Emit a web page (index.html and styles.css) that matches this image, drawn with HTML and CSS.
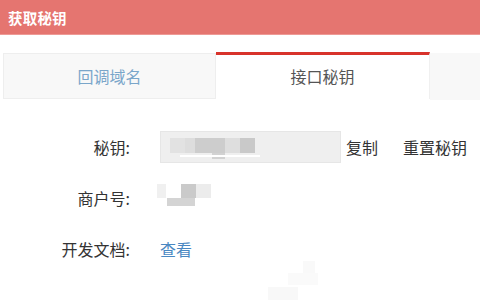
FILE: index.html
```html
<!DOCTYPE html>
<html lang="zh">
<head>
<meta charset="utf-8">
<link rel="stylesheet" href="styles.css">
</head>
<body>
<div class="header"><span class="title">获取秘钥</span></div>
<div class="tabs">
  <div class="tab tab-inactive">回调域名</div>
  <div class="tab tab-active">接口秘钥</div>
  <div class="tab-rest"></div>
</div>
<div class="content">
  <div class="row">
    <div class="label">秘钥:</div>
    <div class="keybox"><div class="blur-key"></div></div>
    <span class="action copy">复制</span>
    <span class="action reset">重置秘钥</span>
  </div>
  <div class="row">
    <div class="label">商户号:</div>
    <div class="blur-mch"></div>
  </div>
  <div class="row">
    <div class="label">开发文档:</div>
    <a class="link">查看</a>
  </div>
  <div class="faint"></div>
</div>
</body>
</html>
```

FILE: styles.css
```css
html, body {
  margin: 0;
  padding: 0;
  background: #ffffff;
  width: 480px;
  height: 300px;
  overflow: hidden;
  font-family: "Noto Sans CJK SC", "Noto Sans", sans-serif;
}
.header {
  height: 34px;
  background: #e57570;
  border-bottom: 1px solid #ee9a96;
  display: flex;
  align-items: center;
  padding-left: 8px;
}
.title {
  color: #ffffff;
  font-weight: bold;
  font-size: 14.5px;
  letter-spacing: 0.2px;
}
.tabs {
  margin-top: 17px;
  display: flex;
  padding-left: 3px;
  height: 47px;
}
.tab {
  display: flex;
  align-items: center;
  justify-content: center;
  font-size: 16px;
  box-sizing: border-box;
}
.tab-inactive {
  width: 213px;
  margin-top: 1px;
  height: 46px;
  background: #f8f8f8;
  border: 1px solid #eeeeee;
  color: #7aa6ca;
}
.tab-active {
  width: 214px;
  height: 47px;
  background: #ffffff;
  border-top: 3px solid #d8332b;
  border-right: 1px solid #f0f0f0;
  color: #555555;
  padding-bottom: 3px;
}
.tab-rest {
  flex: 1;
  margin-top: 1px;
  height: 47px;
  background: #f8f8f8;
}
.content {
  padding-top: 22px;
  position: relative;
  height: 180px;
}
.row {
  display: flex;
  align-items: center;
  height: 51px;
}
.label {
  width: 130px;
  text-align: right;
  font-size: 16px;
  color: #333333;
  margin-right: 30px;
}
.keybox {
  width: 181px;
  height: 32px;
  box-sizing: border-box;
  background: #efefef;
  border: 1px solid #e6e6e6;
  padding: 6px 0 0 9px;
}
.blur-key {
  width: 90px;
  height: 22px;
  background:
    linear-gradient(#ffffff, #ffffff) 10px 17px / 80px 2px no-repeat,
    linear-gradient(#e2e2e2, #e2e2e2) 0 0 / 15px 15px no-repeat,
    linear-gradient(#dddddd, #dddddd) 15px 0 / 10px 15px no-repeat,
    linear-gradient(#cdcdcd, #cdcdcd) 25px 0 / 30px 15px no-repeat,
    linear-gradient(#d2d2d2, #d2d2d2) 42px 15px / 13px 6px no-repeat,
    linear-gradient(#dedede, #dedede) 55px 0 / 15px 15px no-repeat,
    linear-gradient(#c9c9c9, #c9c9c9) 70px 0 / 15px 15px no-repeat;
}
.action {
  font-size: 16px;
  color: #333333;
}
.copy {
  margin-left: 5px;
}
.reset {
  margin-left: 25px;
}
.blur-mch {
  margin-left: -3px;
  margin-top: -6px;
  width: 55px;
  height: 22px;
  background:
    linear-gradient(#f0f0f0, #f0f0f0) 0 0 / 9px 14px no-repeat,
    linear-gradient(#cacaca, #cacaca) 24px 0 / 15px 14px no-repeat,
    linear-gradient(#ececec, #ececec) 39px 0 / 15px 14px no-repeat,
    linear-gradient(#d4d4d4, #d4d4d4) 10px 14px / 28px 8px no-repeat;
}
.link {
  font-size: 16px;
  color: #4a88c2;
}
.faint {
  position: absolute;
  left: 268px;
  top: 162px;
  width: 55px;
  height: 40px;
  background:
    linear-gradient(#f9f9f9, #f9f9f9) 35px 0 / 12px 12px no-repeat,
    linear-gradient(#fafafa, #fafafa) 20px 12px / 30px 12px no-repeat,
    linear-gradient(#f8f8f8, #f8f8f8) 0 26px / 30px 14px no-repeat;
}
```
